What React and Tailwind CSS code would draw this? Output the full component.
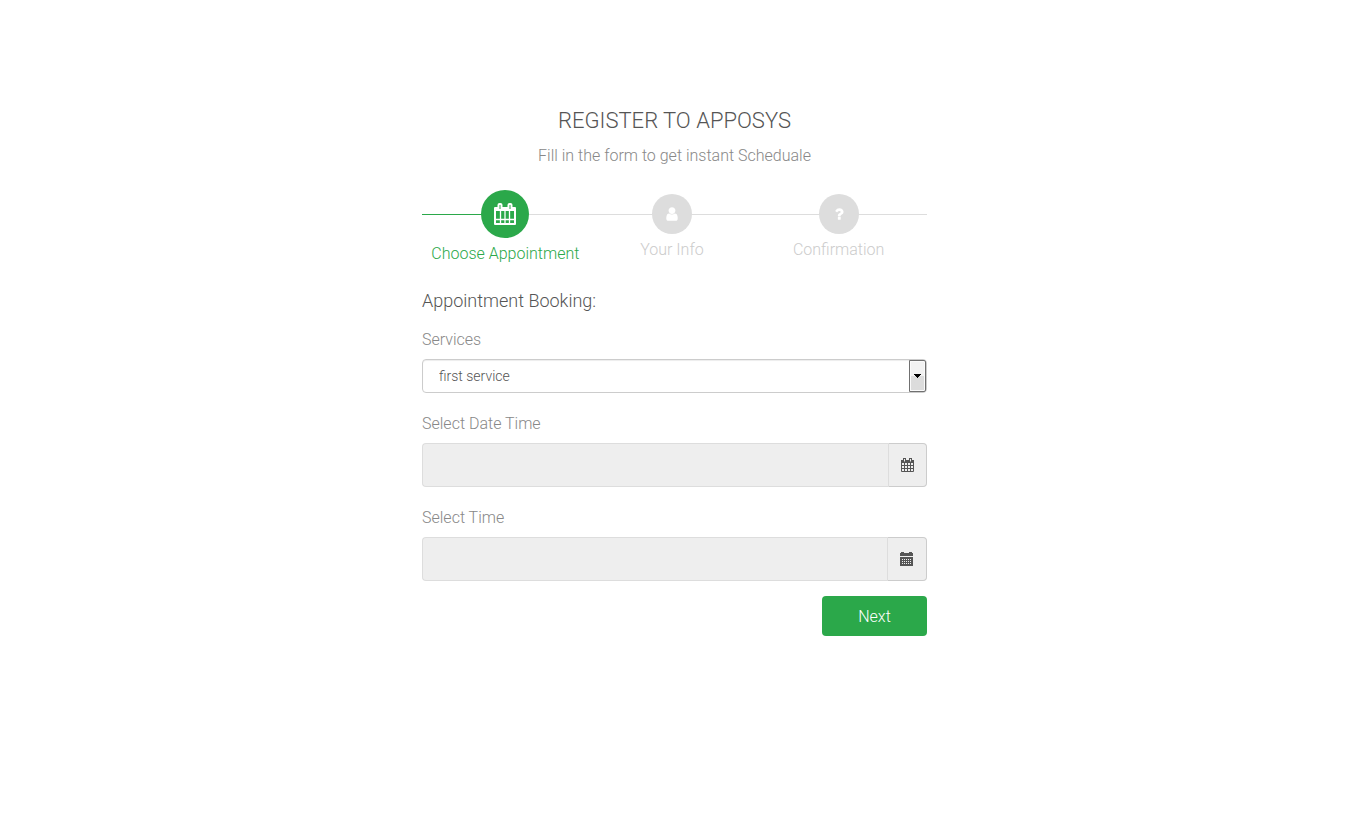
import React, { useState } from 'react';

// Step icons
const StepCalendarIcon = () => (
  <svg width="22" height="24" viewBox="0 0 22 24" fill="none" aria-hidden="true">
    <path d="M1 6h20v16H1z" stroke="currentColor" strokeWidth="2" strokeLinejoin="round" />
    <path d="M1 5h20v4H1z" fill="currentColor" />
    <path d="M6.5 8v14M11 8v14M15.5 8v14M1 17.5h20" stroke="currentColor" strokeWidth="1.3" />
    <rect x="3.5" y="1" width="5" height="7" rx="2" fill="currentColor" />
    <rect x="13.5" y="1" width="5" height="7" rx="2" fill="currentColor" />
    <path d="M6 3v4M16 3v4" stroke="#2ba84a" />
  </svg>
);

const UserIcon = () => (
  <svg width="16" height="16" viewBox="0 0 1792 1792" fill="currentColor" aria-hidden="true">
    <path d="M1536 1399q0 109-62.5 187t-150.5 78h-854q-88 0-150.5-78t-62.5-187q0-85 8.5-160.5t31.5-152 58.5-131 94-89 134.5-34.5q131 128 313 128t313-128q76 0 134.5 34.5t94 89 58.5 131 31.5 152 8.5 160.5zm-256-887q0 159-112.5 271.5t-271.5 112.5-271.5-112.5-112.5-271.5 112.5-271.5 271.5-112.5 271.5 112.5 112.5 271.5z" />
  </svg>
);

const QuestionIcon = () => (
  <svg width="16" height="16" viewBox="0 0 1792 1792" fill="currentColor" aria-hidden="true">
    <path d="M1088 1256v240q0 16-12 28t-28 12h-240q-16 0-28-12t-12-28v-240q0-16 12-28t28-12h240q16 0 28 12t12 28zm316-600q0 54-15.5 101t-35 76.5-55 59.5-57.5 43.5-61 35.5q-41 23-68.5 65t-27.5 67q0 17-12 32.5t-28 15.5h-240q-15 0-25.5-18.5t-10.5-37.5v-45q0-83 65-156.5t143-108.5q59-27 84-56t25-76q0-42-46.5-74t-107.5-32q-65 0-108 29-35 25-107 115-13 16-31 16-12 0-25-8l-164-125q-13-10-15.5-25t5.5-28q160-266 464-266 80 0 161 31t146 83 106 127.5 41 158.5z" />
  </svg>
);

// Field icons
const DateIcon = () => (
  <svg width="13" height="14" viewBox="0 0 13 14" fill="none" aria-hidden="true">
    <path d="M0 2h13v3H0z" fill="currentColor" />
    <path d="M.5 4v9.5h12V4M3.5 5v9M6.5 5v9M9.5 5v9M0 7.5h13M0 10.5h13" stroke="currentColor" />
    <path d="M2 0h3v4H2zM8 0h3v4H8z" fill="currentColor" />
    <path d="M3.5 1v2.5M9.5 1v2.5" stroke="#eee" />
  </svg>
);

const TimeIcon = () => (
  <svg width="14" height="14" viewBox="0 0 14 14" fill="currentColor" aria-hidden="true">
    <path d="M0 1h1V0h3v1h5V0h3v1h1v3H0z" />
    <path
      fillRule="evenodd"
      d="M0 5h13v9H0zM2 7v1h1V7zM4 7v1h1V7zM6 7v1h1V7zM8 7v1h1V7zM10 7v1h1V7zM2 9v1h1V9zM4 9v1h1V9zM6 9v1h1V9zM8 9v1h1V9zM10 9v1h1V9zM2 11v1h1v-1zM4 11v1h1v-1zM6 11v1h1v-1zM8 11v1h1v-1zM10 11v1h1v-1z"
    />
  </svg>
);

const steps = [
  { id: 'appointment', title: 'Choose Appointment', icon: StepCalendarIcon },
  { id: 'info', title: 'Your Info', icon: UserIcon },
  { id: 'confirmation', title: 'Confirmation', icon: QuestionIcon }
];

const Step = ({ title, icon: Icon, active }) => (
  <li className={`flex w-[33%] flex-col items-center ${active ? 'text-[#2ba84a]' : 'pt-1 text-[#ccc]'}`}>
    <span
      className={`flex items-center justify-center rounded-full text-white ${
        active ? 'h-12 w-12 bg-[#2ba84a]' : 'h-10 w-10 bg-[#ddd]'
      }`}
    >
      <Icon />
    </span>
    <span className="mt-0.5">{title}</span>
  </li>
);

const PickerField = ({ id, label, icon: Icon, onOpen }) => (
  <div className="mb-[17px]">
    <label htmlFor={id} className="mb-[5px] block">{label}</label>
    <div className="flex h-11">
      <input
        id={id}
        type="text"
        readOnly
        className="min-w-0 flex-1 rounded-l border border-r-0 border-[#ddd] bg-[#eee] px-4 outline-none"
      />
      <button
        type="button"
        aria-label={`Open ${label}`}
        onClick={onOpen}
        className="flex items-center rounded-r border border-[#ccc] border-l-[#ddd] bg-[#eee] px-3 text-[#555]"
      >
        <Icon />
      </button>
    </div>
  </div>
);

const App = () => {
  const [service, setService] = useState('first');

  return (
    <main className="mx-auto max-w-[505px] pt-[106px] font-['Roboto',sans-serif] text-base leading-7 font-light text-[#888]">
      <header className="text-center">
        <h1 className="text-[22px] leading-[30px] text-[#555] uppercase">Register to Apposys</h1>
        <p className="mt-1.5">Fill in the form to get instant Scheduale</p>
      </header>

      {/* Steps */}
      <div className="relative mt-5">
        <div className="absolute top-6 left-0 h-px w-full bg-[#ddd]">
          <div className="h-px w-1/6 bg-[#2ba84a]" />
        </div>
        <ol className="relative flex">
          {steps.map((step, index) => (
            <Step key={step.id} title={step.title} icon={step.icon} active={index === 0} />
          ))}
        </ol>
      </div>

      <form className="mt-[19px]" onSubmit={(event) => event.preventDefault()}>
        <h2 className="mb-[11px] text-lg leading-7 text-[#555]">Appointment Booking:</h2>

        <div className="mb-[17px]">
          <label htmlFor="service" className="mb-[5px] block">Services</label>
          <div className="relative">
            <select
              id="service"
              value={service}
              onChange={(event) => setService(event.target.value)}
              className="block h-[34px] w-full appearance-none rounded border border-[#ccc] bg-white px-4 text-sm text-[#555] shadow-[inset_0_1px_1px_rgba(0,0,0,0.075)] outline-none"
            >
              <option value="first">first service</option>
              <option value="second">second service</option>
            </select>
            <span className="pointer-events-none absolute inset-y-px right-px flex w-[17px] items-center justify-center rounded-r-xs border border-[#707070] bg-linear-to-b from-[#f2f2f2] from-50% to-[#dcdcdc] to-50% shadow-[inset_0_0_0_1px_#fafafa]">
              <svg width="7" height="4" viewBox="0 0 7 4" aria-hidden="true">
                <path d="M0 0h7v1H6v1H5v1H4v1H3V3H2V2H1V1H0z" fill="#000" />
              </svg>
            </span>
          </div>
        </div>

        <PickerField id="date" label="Select Date Time" icon={DateIcon} />
        <PickerField id="time" label="Select Time" icon={TimeIcon} />

        <div className="-mt-0.5 flex justify-end">
          <button type="submit" className="h-10 w-[105px] rounded bg-[#2ba84a] pt-0.5 text-white">
            Next
          </button>
        </div>
      </form>
    </main>
  );
};

export default App;
